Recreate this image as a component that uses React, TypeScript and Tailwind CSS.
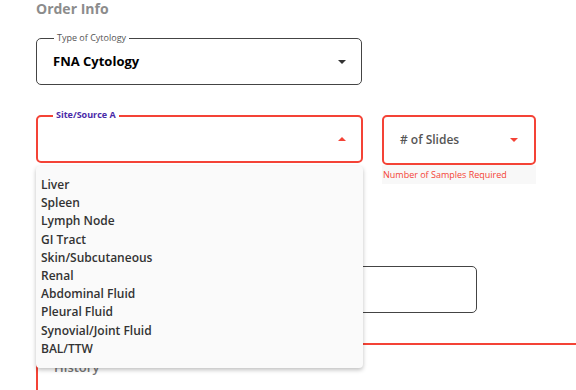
import React from "react";

function Caret({ up = false, color = "#333" }: { up?: boolean; color?: string }) {
  return (
    <svg width="8" height="4" viewBox="0 0 8 4" className="shrink-0">
      {up ? <path d="M0 4 L4 0 L8 4 Z" fill={color} /> : <path d="M0 0 L4 4 L8 0 Z" fill={color} />}
    </svg>
  );
}

const items = [
  "Liver",
  "Spleen",
  "Lymph Node",
  "GI Tract",
  "Skin/Subcutaneous",
  "Renal",
  "Abdominal Fluid",
  "Pleural Fluid",
  "Synovial/Joint Fluid",
  "BAL/TTW",
];

export default function App() {
  return (
    <div className="relative w-[576px] h-[390px] overflow-hidden bg-white font-['Open_Sans',sans-serif]">
      <div className="flex flex-col pl-[36px]">
        <h2 className="text-[14px] leading-[18px] font-bold text-[#8c8c8c]">Order Info</h2>

        <div className="relative mt-[20px] w-[326px] h-[47px] border border-[#444] rounded-[5px] flex items-center justify-between pl-[16px] pr-[15px]">
          <span className="absolute -top-[7px] left-[17px] bg-white px-[3px] text-[9px] leading-[12px] text-[#555]">
            Type of Cytology
          </span>
          <span className="text-[13px] font-bold text-black">FNA Cytology</span>
          <Caret />
        </div>

        <div className="mt-[30px] flex gap-[19px] items-start">
          <div className="relative w-[327px] h-[48px] border-2 border-[#f44336] rounded-[5px] flex items-center justify-end pr-[15px]">
            <span className="absolute -top-[8px] left-[15px] bg-white px-[3px] text-[9px] leading-[12px] font-bold text-[#4a2aa8]">
              Site/Source A
            </span>
            <Caret up color="#f44336" />
          </div>
          <div className="flex flex-col w-[154px]">
            <div className="h-[50px] border-2 border-[#f44336] rounded-[5px] flex items-center justify-between pl-[16px] pr-[16px]">
              <span className="text-[12px] font-semibold text-[#555]">
                # of Slides
              </span>
              <Caret color="#f44336" />
            </div>
            <div className="bg-[#f8f8f8] h-[19px] pl-[1px] flex items-center text-[9px] text-[#f44336]">
              Number of Samples Required
            </div>
          </div>
        </div>

        <div className="mt-[82px] w-[441px] h-[47px] border border-[#444] rounded-[5px]" />

        <div className="mt-[30px] w-[600px] h-[100px] border-2 border-[#f44336] rounded-[5px] pl-[16px] pt-[9px]">
          <span className="text-[13px] font-semibold text-[#777]">History</span>
        </div>
      </div>

      <div className="absolute left-[36px] top-[166px] w-[327px] h-[202px] bg-[#fafafa] rounded-[4px] shadow-[0_2px_4px_rgba(0,0,0,0.25)] pt-[10px] pl-[5px]">
        {items.map((it) => (
          <div key={it} className="h-[18.2px] leading-[18.2px] text-[12px] font-semibold text-[#333]">
            {it}
          </div>
        ))}
      </div>
    </div>
  );
}
